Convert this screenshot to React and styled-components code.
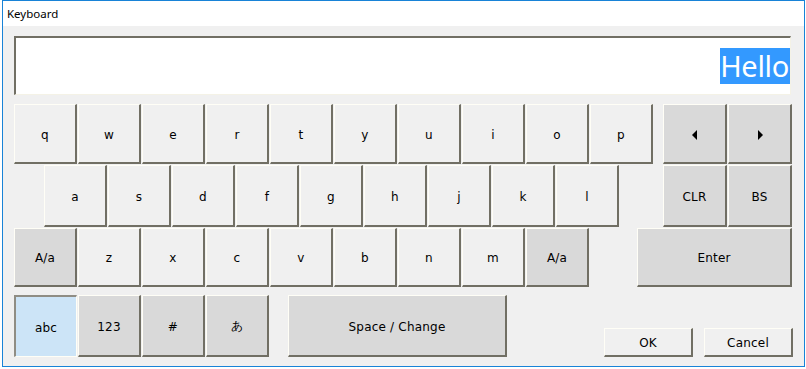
import React from "react";
import styled, { createGlobalStyle } from "styled-components";

const GlobalStyle = createGlobalStyle`
  html, body {
    margin: 0;
    padding: 0;
    background: #ffffff;
  }
`;

const Window = styled.div`
  box-sizing: border-box;
  margin-left: 2px;
  width: 803px;
  height: 367px;
  border: 1px solid #1883d7;
  display: flex;
  flex-direction: column;
  background: #ffffff;
`;

const TitleBar = styled.div`
  height: 25px;
  display: flex;
  align-items: center;
  padding-left: 4px;
  font-family: "Noto Sans", "Open Sans", sans-serif;
  font-size: 11.5px;
  color: #000;
`;

const Body = styled.div`
  flex: 1;
  background: #f0f0f0;
  padding: 10px 0 0 11px;
  display: flex;
  flex-direction: column;
`;

const Display = styled.div`
  box-sizing: border-box;
  width: 777px;
  height: 59px;
  background: #ffffff;
  border-top: 2px solid #716f64;
  border-left: 2px solid #716f64;
  border-right: 1px solid #f4f2e6;
  border-bottom: 1px solid #f4f2e6;
  display: flex;
  align-items: center;
  justify-content: flex-end;
`;

const Selected = styled.span`
  background: #3399ff;
  color: #ffffff;
  font-family: "Noto Sans", "Open Sans", sans-serif;
  font-size: 29px;
  line-height: 36px;
  height: 36px;
  padding: 0 1px 0 0;
  letter-spacing: -0.3px;
`;

const Rows = styled.div`
  margin-top: 9px;
  display: flex;
  flex-direction: column;
  gap: 1px;
`;

const Row = styled.div`
  display: flex;
  align-items: ${(p) => (p.$bottom ? "flex-end" : "stretch")};
  height: ${(p) => p.$h}px;
  margin-top: ${(p) => p.$mt || 0}px;
  gap: 1px;
`;

const Key = styled.button`
  box-sizing: border-box;
  flex: none;
  width: ${(p) => p.$w || 63}px;
  height: ${(p) => (p.$h ? `${p.$h}px` : "100%")};
  margin: 0 0 0 ${(p) => p.$ml || 0}px;
  padding: 2px 0 0 0;
  background: ${(p) =>
    p.$active ? "#cce4f7" : p.$dark ? "#d9d9d9" : "#f0f0f0"};
  border-style: solid;
  border-width: ${(p) => (p.$active ? "2px 1px 1px 2px" : "1px 2px 2px 1px")};
  border-color: ${(p) =>
    p.$active
      ? "#8f8d84 #fffef6 #fffef6 #8f8d84"
      : "#fffef6 #716f64 #716f64 #fffef6"};
  font-family: "DejaVu Sans", Verdana, sans-serif;
  font-size: 12px;
  letter-spacing: 0.2px;
  color: #000;
  display: flex;
  align-items: center;
  justify-content: center;
  cursor: pointer;
`;

const Arrow = ({ dir }) => (
  <svg width="6" height="10" viewBox="0 0 6 10">
    {dir === "left" ? (
      <path d="M5 0 L5 10 L0 5 Z" fill="#000" />
    ) : (
      <path d="M1 0 L1 10 L6 5 Z" fill="#000" />
    )}
  </svg>
);

const row1 = ["q", "w", "e", "r", "t", "y", "u", "i", "o", "p"];
const row2 = ["a", "s", "d", "f", "g", "h", "j", "k", "l"];
const row3 = ["z", "x", "c", "v", "b", "n", "m"];

export default function App() {
  return (
    <>
      <GlobalStyle />
      <Window>
        <TitleBar>Keyboard</TitleBar>
        <Body>
          <Display>
            <Selected>Hello</Selected>
          </Display>
          <Rows>
            <Row $h={60}>
              {row1.map((k) => (
                <Key key={k}>{k}</Key>
              ))}
              <Key $dark $w={64} $ml={9}>
                <Arrow dir="left" />
              </Key>
              <Key $dark $w={64}>
                <Arrow dir="right" />
              </Key>
            </Row>
            <Row $h={62}>
              {row2.map((k, i) => (
                <Key key={k} $ml={i === 0 ? 30 : 0}>
                  {k}
                </Key>
              ))}
              <Key $dark $w={64} $ml={43}>
                CLR
              </Key>
              <Key $dark $w={64}>
                BS
              </Key>
            </Row>
            <Row $h={59}>
              <Key $dark>A/a</Key>
              {row3.map((k) => (
                <Key key={k}>{k}</Key>
              ))}
              <Key $dark>A/a</Key>
              <Key $dark $w={155} $ml={47}>
                Enter
              </Key>
            </Row>
            <Row $h={62} $mt={7} $bottom>
              <Key $active>abc</Key>
              <Key $dark>123</Key>
              <Key $dark>#</Key>
              <Key $dark>あ</Key>
              <Key $dark $w={219} $ml={18}>
                Space / Change
              </Key>
              <Key $w={89} $h={29} $ml={96}>
                OK
              </Key>
              <Key $w={89} $h={29} $ml={10}>
                Cancel
              </Key>
            </Row>
          </Rows>
        </Body>
      </Window>
    </>
  );
}
